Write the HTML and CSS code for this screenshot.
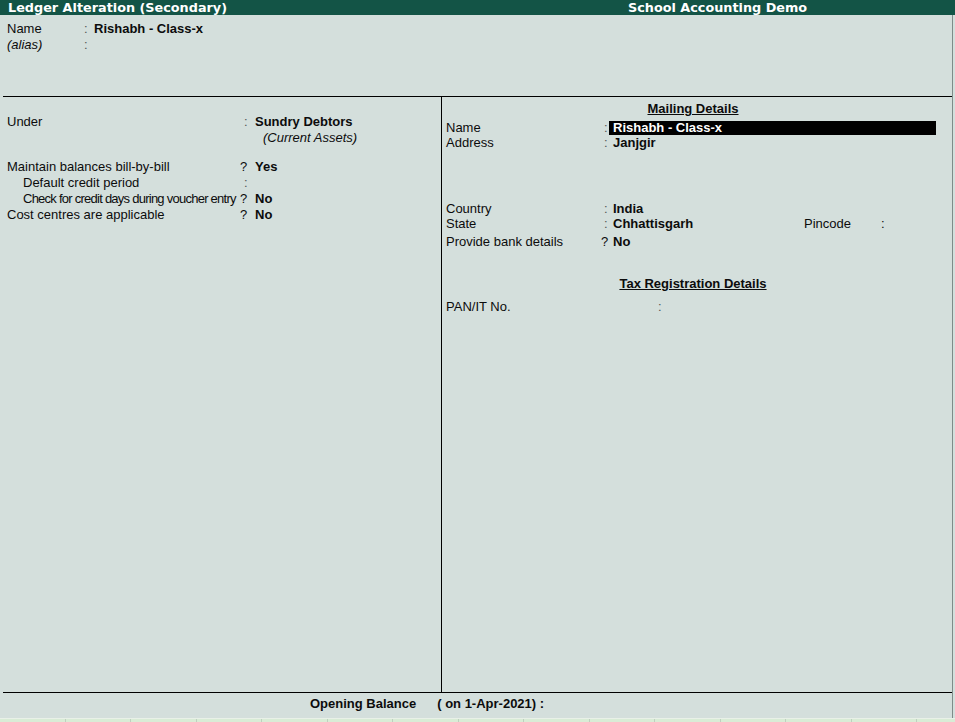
FILE: index.html
```html
<!DOCTYPE html>
<html>
<head>
<meta charset="utf-8">
<link rel="stylesheet" href="styles.css">
</head>
<body>
<div class="screen">
  <div class="titlebar">
    <div class="title">Ledger Alteration (Secondary)</div>
    <div class="company">School Accounting Demo</div>
  </div>
  <div class="frame">
    <div class="top">
      <div class="trow"><span class="tlabel">Name</span><span class="sep">:</span><span class="val">Rishabh - Class-x</span></div>
      <div class="trow"><span class="tlabel italic">(alias)</span><span class="sep">:</span><span></span></div>
    </div>
    <div class="middle">
      <div class="left">
        <div class="lrow"><span class="llabel">Under</span><span class="lsep">:</span><span class="val">Sundry Debtors</span></div>
        <div class="lrow"><span class="llabel"></span><span class="lsep"></span><span class="sub italic">(Current Assets)</span></div>
        <div class="lrow gap"><span class="llabel">Maintain balances bill-by-bill</span><span class="lsep q">?</span><span class="val">Yes</span></div>
        <div class="lrow"><span class="llabel indent">Default credit period</span><span class="lsep">:</span><span></span></div>
        <div class="lrow"><span class="llabel indent narrow">Check for credit days during voucher entry</span><span class="lsep q">?</span><span class="val">No</span></div>
        <div class="lrow"><span class="llabel">Cost centres are applicable</span><span class="lsep q">?</span><span class="val">No</span></div>
      </div>
      <div class="right">
        <div class="heading">Mailing Details</div>
        <div class="rrow r-name"><span class="rlabel">Name</span><span class="rsep">:</span><span class="hl">Rishabh - Class-x</span></div>
        <div class="rrow"><span class="rlabel">Address</span><span class="rsep">:</span><span class="val">Janjgir</span></div>
        <div class="rrow r-country"><span class="rlabel">Country</span><span class="rsep">:</span><span class="val">India</span></div>
        <div class="rrow r-state"><span class="rlabel">State</span><span class="rsep">:</span><span class="val">Chhattisgarh</span><span class="pin">Pincode</span><span class="pinsep">:</span></div>
        <div class="rrow r-bank"><span class="rlabel">Provide bank details</span><span class="rsep q2">?</span><span class="val">No</span></div>
        <div class="heading tax">Tax Registration Details</div>
        <div class="rrow r-pan"><span class="panlabel">PAN/IT No.</span><span class="rsep">:</span></div>
      </div>
    </div>
    <div class="bottom">
      <span class="ob">Opening Balance</span><span class="obdate">( on 1-Apr-2021) :</span>
    </div>
  </div>
  <div class="strip">
    <span></span><span></span><span></span><span></span><span></span><span></span><span></span><span></span><span></span><span></span><span></span><span></span><span></span><span></span><span></span>
  </div>
</div>
</body>
</html>
```

FILE: styles.css
```css
html, body {
  margin: 0;
  padding: 0;
}
body {
  background: #d4dfdc;
  font-family: "Liberation Sans", Arial, sans-serif;
  font-size: 13px;
  color: #0c0c0c;
}
.screen {
  width: 955px;
  height: 722px;
  overflow: hidden;
  display: flex;
  flex-direction: column;
}
.titlebar {
  height: 15px;
  background: #135446;
  color: #ffffff;
  font-family: "DejaVu Sans", Verdana, sans-serif;
  font-weight: bold;
  font-size: 12.8px;
  line-height: 15px;
  display: grid;
  grid-template-columns: 628px auto;
  flex: none;
}
.title {
  padding-left: 8px;
}
.frame {
  margin-left: 3px;
  width: 949px;
  border-right: 1px solid #7f8c89;
  flex: 1;
  display: flex;
  flex-direction: column;
}
.italic {
  font-style: italic;
}
.val {
  font-weight: bold;
}
.top {
  height: 75px;
  padding-top: 6px;
  border-bottom: 1px solid #000;
  flex: none;
}
.trow {
  display: grid;
  grid-template-columns: 77px 10px auto;
  line-height: 16px;
  padding-left: 4px;
}
.sep {
  color: #555;
}
.middle {
  flex: 1;
  display: grid;
  grid-template-columns: 439px 1fr;
  border-bottom: 1px solid #000;
}
.left {
  border-right: 1px solid #000;
  padding-top: 17px;
}
.lrow {
  display: grid;
  grid-template-columns: 236px 12px auto;
  line-height: 16px;
  padding-left: 4px;
}
.lrow.gap {
  margin-top: 13px;
}
.lsep {
  padding-left: 1px;
  color: #555;
}
.lsep.q {
  padding-left: 0;
  margin-left: -3px;
  color: #0c0c0c;
}
.indent {
  padding-left: 16px;
}
.narrow {
  letter-spacing: -0.75px;
  white-space: nowrap;
}
.sub {
  padding-left: 8px;
}
.right {
  padding-top: 4px;
}
.heading {
  font-weight: bold;
  text-decoration: underline;
  text-align: center;
  line-height: 16px;
  padding-right: 8px;
}
.heading.tax {
  margin-top: 27px;
}
.rrow {
  display: grid;
  grid-template-columns: 158px 9px auto;
  line-height: 15px;
  padding-left: 4px;
  align-items: center;
}
.r-name {
  margin-top: 3px;
}
.r-country {
  margin-top: 51px;
}
.r-state {
  grid-template-columns: 158px 9px 191px 77px 9px;
}
.r-bank {
  margin-top: 3px;
}
.r-pan {
  grid-template-columns: 212px 9px auto;
  margin-top: 7px;
}
.rsep {
  color: #555;
}
.rsep.q2 {
  margin-left: -3px;
  color: #0c0c0c;
}
.hl {
  background: #000;
  color: #fff;
  font-weight: bold;
  width: 323px;
  padding-left: 4px;
  margin-left: -4px;
  line-height: 14px;
}
.bottom {
  height: 22px;
  padding-top: 3px;
  line-height: 16px;
  font-weight: bold;
  flex: none;
}
.ob {
  margin-left: 307px;
}
.obdate {
  margin-left: 21px;
}
.strip {
  height: 3px;
  flex: none;
  display: flex;
  background: #d9ecd6;
  border-top: 1px solid #e9f1e8;
}
.strip span {
  width: 65.5px;
  flex: none;
  border-right: 1px solid #bfcfbf;
  box-sizing: border-box;
}
```
